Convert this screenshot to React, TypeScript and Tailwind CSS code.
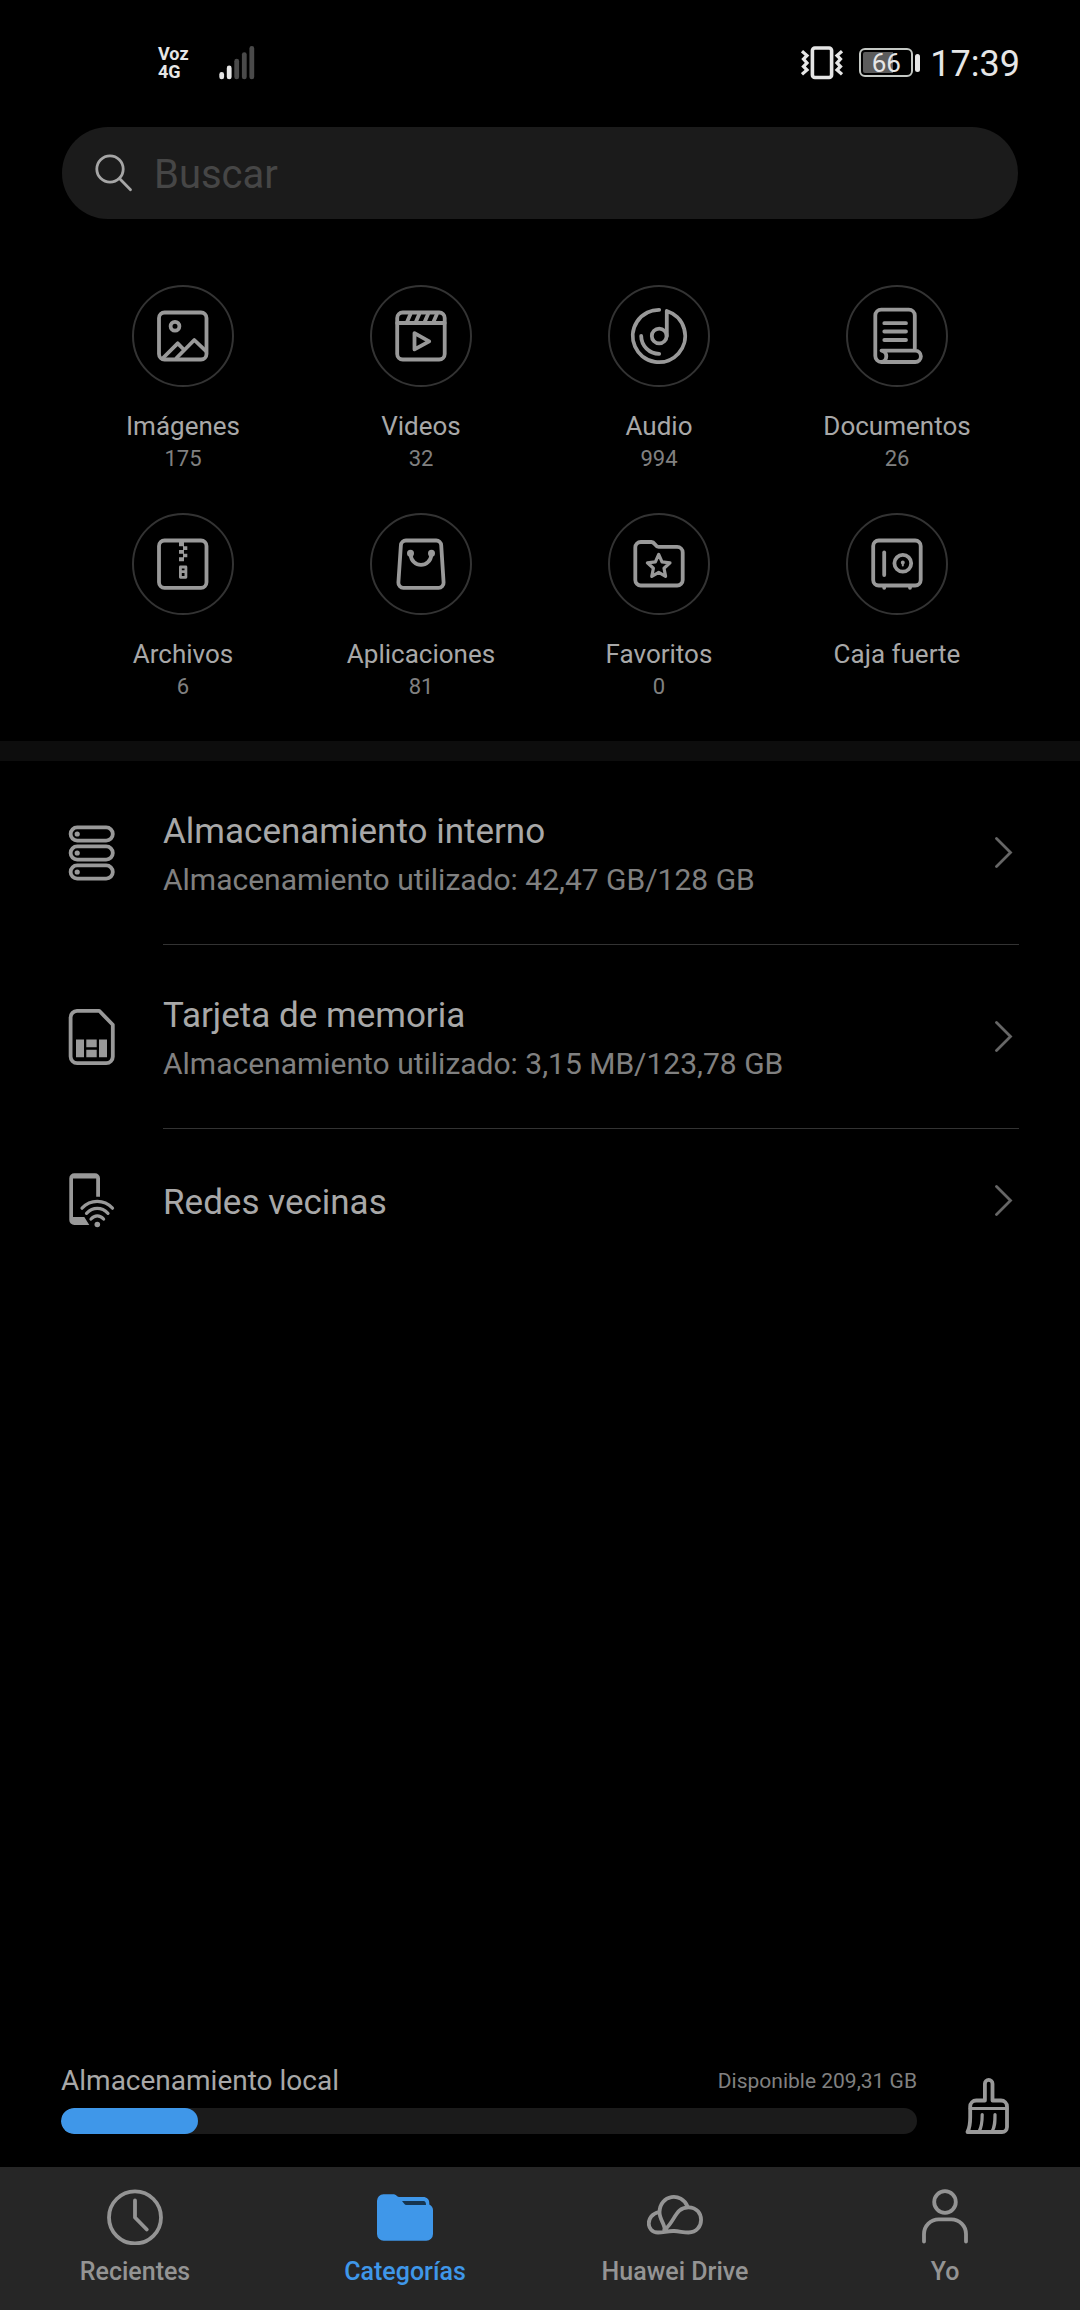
import type { ReactNode } from "react";

type Category = {
  name: string;
  count?: number;
  icon: ReactNode;
};

type Place = {
  title: string;
  detail?: string;
  icon: ReactNode;
};

type Tab = {
  name: string;
  icon: ReactNode;
  active?: boolean;
};

const categories: Category[] = [
  {
    name: "Imágenes",
    count: 175,
    icon: (
      <>
        <rect x="6" y="6.5" width="47.5" height="47" rx="5.5" />
        <circle cx="22" cy="20.3" r="4.4" />
        <path d="M10 52 24.7 37.3 30.3 43M23.5 52 41.3 34 53 45.2" />
      </>
    ),
  },
  {
    name: "Videos",
    count: 32,
    icon: (
      <>
        <rect x="6.2" y="6.5" width="47.5" height="47" rx="5.5" />
        <path d="M6.2 17H53.7M16 16 19.5 8M24.8 16 28.3 8M33.6 16 37.1 8M42.4 16 45.9 8" />
        <path d="M23.5 27.2V43.4L38.2 35.3Z" />
      </>
    ),
  },
  {
    name: "Audio",
    count: 994,
    icon: (
      <>
        <path d="M30.2 3.8A26.2 26.2 0 1 0 37.8 5V30" />
        <circle cx="30.2" cy="30" r="7.4" />
        <path d="M12.2 30A18 18 0 0 0 30.2 47.8" />
      </>
    ),
  },
  {
    name: "Documentos",
    count: 26,
    icon: (
      <>
        <path d="M47.8 44V9.5A6 6 0 0 0 41.8 3.6H14.3A6 6 0 0 0 8.3 9.5V50A6 6 0 0 0 14.3 56H48.2A5.7 5.7 0 0 0 48.2 44.6H14.5C21 45.5 20.8 55 14.5 56" />
        <path d="M17.3 17.2H39M17.3 25.5H39M17.3 34H39" />
      </>
    ),
  },
  {
    name: "Archivos",
    count: 6,
    icon: (
      <>
        <rect x="6" y="6.5" width="47.5" height="47.3" rx="5.5" />
        <path
          fill="currentColor"
          stroke="none"
          d="M26 8H31V12.3H34.3V16H31V19.7H34.3V23.3H31V27.3H26V23.3H30V19.7H26V16H30V12.3H26Z"
        />
        <path strokeWidth="2.8" d="M27.4 33H32.9V43.3H27.4ZM27.4 37.6H32.9" />
      </>
    ),
  },
  {
    name: "Aplicaciones",
    count: 81,
    icon: (
      <>
        <path d="M15 6.5H45.2A5 5 0 0 1 50.2 11.2L52.6 48.5A5 5 0 0 1 47.6 53.8H12.4A5 5 0 0 1 7.4 48.5L9.9 11.2A5 5 0 0 1 15 6.5Z" />
        <path d="M19.5 20C20.5 34.5 39.5 34.5 40.5 20" />
        <circle cx="19.5" cy="19.3" r="1.6" />
        <circle cx="40.5" cy="19.3" r="1.6" />
      </>
    ),
  },
  {
    name: "Favoritos",
    count: 0,
    icon: (
      <>
        <path d="M11.8 8H22.5C26 8 26 12.9 29.5 12.9H48.2A5.5 5.5 0 0 1 53.7 18.4V46A5.5 5.5 0 0 1 48.2 51.5H11.8A5.5 5.5 0 0 1 6.3 46V13.5A5.5 5.5 0 0 1 11.8 8Z" />
        <path
          strokeWidth="3.2"
          d="M29.7 20.4 33 27.9 41 28.8 35 34.3 36.6 42.4 29.7 38.4 22.8 42.4 24.4 34.3 18.4 28.8 26.4 27.9Z"
        />
      </>
    ),
  },
  {
    name: "Caja fuerte",
    icon: (
      <>
        <rect x="6.2" y="6.5" width="47.5" height="45" rx="5.5" />
        <path d="M17.2 18.5V41" />
        <circle cx="35.8" cy="29.3" r="8.4" />
        <circle cx="35.8" cy="28.6" r="1" strokeWidth="2" />
        <path strokeWidth="2" d="M35.8 28.6V31.5" />
        <path d="M17.2 53V53.8M43 53V53.8" />
      </>
    ),
  },
];

const places: Place[] = [
  {
    title: "Almacenamiento interno",
    detail: "Almacenamiento utilizado: 42,47 GB/128 GB",
    icon: (
      <>
        <rect x="2.6" y="4.4" width="42.2" height="13.2" rx="6.6" />
        <rect x="2.6" y="23.4" width="42.2" height="13.2" rx="6.6" />
        <rect x="2.6" y="42.4" width="42.2" height="13.2" rx="6.6" />
        <g fill="currentColor" stroke="none">
          <circle cx="9.2" cy="11" r="2.6" />
          <circle cx="9.2" cy="30" r="2.6" />
          <circle cx="9.2" cy="49" r="2.6" />
        </g>
      </>
    ),
  },
  {
    title: "Tarjeta de memoria",
    detail: "Almacenamiento utilizado: 3,15 MB/123,78 GB",
    icon: (
      <>
        <path d="M9 3.8H31.2L44.8 17.8V49.5A6.6 6.6 0 0 1 38.2 56.2H9.2A6.6 6.6 0 0 1 2.6 49.5V10.4A6.6 6.6 0 0 1 9 3.8Z" />
        <path
          fill="currentColor"
          stroke="none"
          d="M8 32.5H16V50.2H8ZM18.3 32.5H28.7V40.2H18.3ZM18.3 42.8H28.7V50.2H18.3ZM31 32.5H39V50.2H31Z"
        />
      </>
    ),
  },
  {
    title: "Redes vecinas",
    icon: (
      <>
        <path
          fill="currentColor"
          stroke="none"
          d="M6.3 2.3H27A5 5 0 0 1 32 7.3V25.7H28.2V7.6H5V46H16.3L21.3 54H6.3A5 5 0 0 1 1.3 49V7.3A5 5 0 0 1 6.3 2.3Z"
        />
        <g strokeWidth="3.2">
          <path d="M14 37.2C22.5 28.2 36 28.2 44.5 37.2" />
          <path d="M18.5 42.4C25 35.8 33.6 35.8 40 42.4" />
          <path d="M23 48C26.8 43.9 31.8 43.9 35.6 48" />
        </g>
        <circle cx="29.3" cy="53.5" r="2.8" fill="currentColor" stroke="none" />
      </>
    ),
  },
];

const tabs: Tab[] = [
  {
    name: "Recientes",
    icon: (
      <>
        <circle cx="28" cy="28.4" r="26" />
        <path d="M28 11.5V28.5L39.8 40.5" />
      </>
    ),
  },
  {
    name: "Categorías",
    active: true,
    icon: (
      <g stroke="none">
        <path
          fill="currentColor"
          d="M6.5 5.3H17C19 5.3 19.8 8 22 8H46C50 8 52.3 10.5 52.3 14V15.5C54.5 16.5 56 18.5 56 21V45A6.7 6.7 0 0 1 49.3 51.7H6.7A6.7 6.7 0 0 1 0 45V12A6.6 6.6 0 0 1 6.5 5.3Z"
        />
        <path fill="#163550" d="M25 12H46.5Q49 12 49 16H29.5Q28 16 27 14.5Z" />
      </g>
    ),
  },
  {
    name: "Huawei Drive",
    icon: (
      <>
        <path d="M12 23C-2 26-1 43.5 11 43.5C17 43.5 20 41.8 27 42C33 42.3 36 43.5 41.5 43.5C58 43.5 58.5 18.5 41.5 18.3C28 18.3 28.5 32 17.5 41" />
        <path d="M17.5 41C18.5 35.5 12.5 31 12.5 23C13 5.5 34.5 2.5 40.7 17.8" />
      </>
    ),
  },
  {
    name: "Yo",
    icon: (
      <>
        <circle cx="28" cy="13" r="10.8" />
        <path d="M7 52.5V45A14.7 14.7 0 0 1 21.7 30.4H34.3A14.7 14.7 0 0 1 49 45V52.5" />
      </>
    ),
  },
];

function StatusBar() {
  return (
    <header className="flex h-[127px] items-center justify-between pl-[158px] pr-[60px] text-[#e6e6e6]">
      <div className="flex items-center gap-[30px] pb-0.5">
        <p className="text-[18px] leading-[18px] font-bold">
          Voz
          <br />
          4G
        </p>
        <svg className="h-[34px] w-9" viewBox="0 0 36 34" fill="currentColor">
          <rect x="0.3" y="26" width="4.8" height="7.3" rx="2.4" />
          <rect x="7.8" y="19.5" width="4.8" height="13.8" rx="2.4" />
          <g fill="#4a4a4a">
            <rect x="15.3" y="12.8" width="4.8" height="20.5" rx="2.4" />
            <rect x="22.9" y="6.2" width="4.8" height="27.1" rx="2.4" />
            <rect x="30.4" y="0" width="4.8" height="33.3" rx="2.4" />
          </g>
        </svg>
      </div>

      <div className="flex items-center">
        <div className="mr-[10px] flex items-center pb-0.5">
          <svg
            className="mr-4 h-[34px] w-[42px]"
            viewBox="0 0 42 34"
            fill="none"
            stroke="currentColor"
            strokeWidth="3.2"
          >
            <rect x="11.4" y="2" width="19.2" height="29.5" rx="2.5" strokeWidth="3.6" />
            <path d="M1 5.2 6 9.5 2.5 13 6 17 2.5 20.5 6 24 1 28.3" />
            <path d="M41 5.2 36 9.5 39.5 13 36 17 39.5 20.5 36 24 41 28.3" />
          </svg>
          <div className="flex h-[29px] w-[54px] items-center justify-center rounded-md border-2 border-[#c4c8c4] bg-linear-to-r from-[#5c5c5c] from-65% to-black to-65% bg-clip-content p-0.5 text-[26px] leading-[26px]">
            66
          </div>
          <div className="ml-0.5 h-[18px] w-[5px] rounded-sm bg-current" />
        </div>
        <time className="text-[36px] leading-[40px]">17:39</time>
      </div>
    </header>
  );
}

function SearchBox() {
  return (
    <label className="mx-[62px] flex h-[92px] items-center gap-5 rounded-full bg-[#1b1b1b] px-8">
      <svg
        className="size-10 shrink-0 text-[#a6a6a6]"
        viewBox="0 0 40 40"
        fill="none"
        stroke="currentColor"
        strokeWidth="2.8"
        strokeLinecap="round"
      >
        <circle cx="16" cy="16" r="13.2" />
        <path d="M26 26 36.5 36.7" />
      </svg>
      <input
        type="search"
        aria-label="Buscar"
        placeholder="Buscar"
        className="min-w-0 flex-1 bg-transparent pt-1 text-[40px] leading-[52px] outline-none placeholder:text-[#464646]"
      />
    </label>
  );
}

function CategoryGrid() {
  return (
    <section className="grid grid-cols-4 gap-y-[39px] px-16 pt-[66px] pb-[39px]">
      {categories.map((c) => (
        <button key={c.name} className="flex flex-col items-center justify-start">
          <span className="mb-[21px] flex size-[102px] items-center justify-center rounded-full border-2 border-[#333333]">
            <svg
              className="size-[60px] text-[#999999]"
              viewBox="0 0 60 60"
              fill="none"
              stroke="currentColor"
              strokeWidth="3.8"
              strokeLinecap="round"
              strokeLinejoin="round"
            >
              {c.icon}
            </svg>
          </span>
          <span className="text-[26px] leading-[36px] text-[#a8a8a8]">{c.name}</span>
          <span className="h-[30px] text-[22px] leading-[30px] text-[#808080]">{c.count}</span>
        </button>
      ))}
    </section>
  );
}

function PlaceRow({ title, detail, icon }: Place) {
  return (
    <li className="group">
      <button className="flex w-full items-stretch gap-[47px] pr-[61px] pl-[68px] text-left">
        <span className="flex items-center">
          <svg
            className="h-[60px] w-12 text-[#999999]"
            viewBox="0 0 48 60"
            fill="none"
            stroke="currentColor"
            strokeWidth="3.8"
            strokeLinecap="round"
            strokeLinejoin="round"
          >
            {icon}
          </svg>
        </span>
        <span className="flex min-h-[144px] flex-1 items-center justify-between border-b border-[#333333] pr-1.5 group-last:border-b-0">
          <span className={detail ? "pt-[43px] pb-11" : "pt-1"}>
            <span className="block text-[35px] leading-[56px] text-[#a8a8a8]">{title}</span>
            {detail && <span className="block text-[30px] leading-[40px] text-[#808080]">{detail}</span>}
          </span>
          <svg
            className="h-8 w-[18px] text-[#666666]"
            viewBox="0 0 18 32"
            fill="none"
            stroke="currentColor"
            strokeWidth="2.8"
            strokeLinecap="round"
          >
            <path d="M1.5 1.5 15.5 15.5 1.5 29.5" />
          </svg>
        </span>
      </button>
    </li>
  );
}

function StorageFooter() {
  const used = 16;

  return (
    <section className="flex items-end gap-[47px] pr-[68px] pb-[33px] pl-[61px]">
      <div className="flex-1">
        <div className="mb-[7px] flex items-center justify-between">
          <span id="storage" className="text-[28px] leading-[40px] text-[#a8a8a8]">
            Almacenamiento local
          </span>
          <span className="text-[21px] leading-[40px] text-[#808080]">Disponible 209,31 GB</span>
        </div>
        <div
          role="progressbar"
          aria-labelledby="storage"
          aria-valuenow={used}
          className="h-[26px] overflow-hidden rounded-full bg-[#1b1b1b]"
        >
          <div className="h-full rounded-full bg-[#3f97e9]" style={{ width: `${used}%` }} />
        </div>
      </div>
      <button aria-label="Limpiar">
        <svg
          className="h-[57px] w-12 text-[#999999]"
          viewBox="0 0 48 57"
          fill="none"
          stroke="currentColor"
          strokeWidth="3.8"
          strokeLinecap="round"
          strokeLinejoin="round"
        >
          <path d="M20.9 23.5V6.7A3.8 3.8 0 0 1 28.5 6.7V23.5H37A6 6 0 0 1 43 29.5V50A5 5 0 0 1 38 55H3.5C6.2 50 6.2 46 6.2 40V29.5A6 6 0 0 1 12.2 23.5Z" />
          <path strokeWidth="3.2" d="M6.2 31.5H43M18.2 37.5C18.2 45 18 49 15.3 54M31 37.5C31 45 31 49 28.3 54" />
        </svg>
      </button>
    </section>
  );
}

function TabBar() {
  return (
    <nav className="grid grid-cols-4 bg-[#262626] pt-[22px] pb-5">
      {tabs.map((t) => (
        <button
          key={t.name}
          className={`flex flex-col items-center gap-[9px] ${t.active ? "text-[#3f97e9]" : "text-[#949494]"}`}
        >
          <svg
            className="size-14"
            viewBox="0 0 56 56"
            fill="none"
            stroke="currentColor"
            strokeWidth="3.8"
            strokeLinecap="round"
            strokeLinejoin="round"
          >
            {t.icon}
          </svg>
          <span className="text-[25px] leading-[36px] font-medium">{t.name}</span>
        </button>
      ))}
    </nav>
  );
}

export default function App() {
  return (
    <main className="flex min-h-screen flex-col bg-black font-[Roboto,sans-serif]">
      <StatusBar />
      <SearchBox />
      <CategoryGrid />

      <ul className="flex-1 border-t-[20px] border-[#0d0d0d]">
        {places.map((p) => (
          <PlaceRow key={p.title} {...p} />
        ))}
      </ul>

      <StorageFooter />
      <TabBar />
    </main>
  );
}
